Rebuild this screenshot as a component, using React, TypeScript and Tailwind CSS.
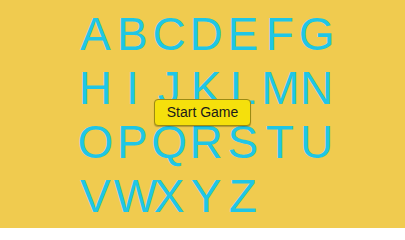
const LETTERS = 'ABCDEFGHIJKLMNOPQRSTUVWXYZ'.split('')

export default function App() {
  return (
    <div
      className="relative h-[228px] w-[405px] overflow-hidden bg-[#f0cb4f]"
      style={{ fontFamily: '"Liberation Sans", Arial, sans-serif' }}
    >
      <div className="ml-[77px] grid w-[258px] grid-cols-7 pt-[7px] text-center text-[46px] leading-[54px] text-[#1fc6e6]">
        {LETTERS.map((ch) => (
          <span key={ch}>{ch}</span>
        ))}
      </div>

      <button className="absolute left-[154px] top-[99px] h-[27px] w-[97px] rounded-[4px] border border-[#9c8a12] bg-[#f5e00c] text-[14px] text-[#1a1a1a] shadow-[0_1px_1px_rgba(0,0,0,0.25)]">
        Start Game
      </button>
    </div>
  )
}
